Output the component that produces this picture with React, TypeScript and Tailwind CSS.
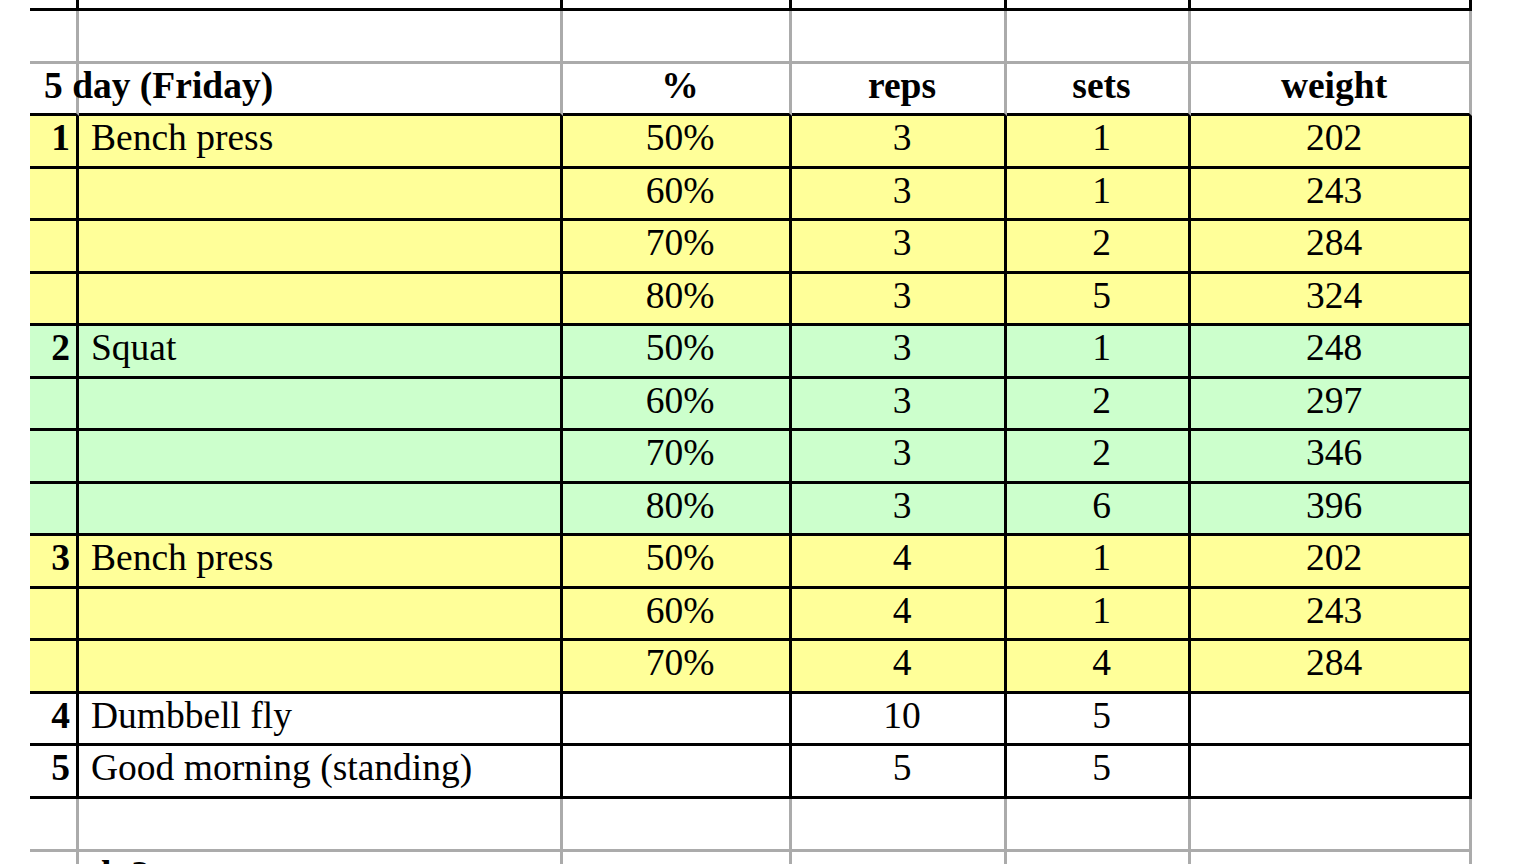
import React from "react";

type Row = {
  n?: string;
  name?: string;
  pct?: string;
  reps?: string;
  sets?: string;
  weight?: string;
  bg: string;
};

const Y = "bg-[#ffff99]";
const G = "bg-[#ccffcc]";
const W = "bg-white";

const rows: Row[] = [
  { n: "1", name: "Bench press", pct: "50%", reps: "3", sets: "1", weight: "202", bg: Y },
  { pct: "60%", reps: "3", sets: "1", weight: "243", bg: Y },
  { pct: "70%", reps: "3", sets: "2", weight: "284", bg: Y },
  { pct: "80%", reps: "3", sets: "5", weight: "324", bg: Y },
  { n: "2", name: "Squat", pct: "50%", reps: "3", sets: "1", weight: "248", bg: G },
  { pct: "60%", reps: "3", sets: "2", weight: "297", bg: G },
  { pct: "70%", reps: "3", sets: "2", weight: "346", bg: G },
  { pct: "80%", reps: "3", sets: "6", weight: "396", bg: G },
  { n: "3", name: "Bench press", pct: "50%", reps: "4", sets: "1", weight: "202", bg: Y },
  { pct: "60%", reps: "4", sets: "1", weight: "243", bg: Y },
  { pct: "70%", reps: "4", sets: "4", weight: "284", bg: Y },
  { n: "4", name: "Dumbbell fly", reps: "10", sets: "5", bg: W },
  { n: "5", name: "Good morning (standing)", reps: "5", sets: "5", bg: W },
];

const widths = ["w-[49px]", "w-[484px]", "w-[229px]", "w-[215px]", "w-[184px]", "w-[281px]"];

const cellBase = "shrink-0 border-r-[3px] border-b-[3px] border-black flex items-center pb-[6px]";

export default function App() {
  return (
    <div
      className="w-[1536px] h-[864px] overflow-hidden bg-white text-black text-[37.5px] leading-none pl-[30px]"
      style={{ fontFamily: '"Liberation Serif", "Times New Roman", serif' }}
    >
      <div className="flex flex-col w-fit">
        {/* tail of previous table */}
        <div className="flex h-[11px]">
          {widths.map((w, i) => (
            <div key={i} className={`${w} shrink-0 border-r-[3px] border-b-[3px] border-r-black border-b-black`} />
          ))}
        </div>
        {/* empty gray row */}
        <div className="flex h-[53px]">
          {widths.map((w, i) => (
            <div key={i} className={`${w} shrink-0 border-r-[3px] border-b-[3px] border-r-[#ababab] border-b-[#ababab]`} />
          ))}
        </div>
        {/* header */}
        <div className="flex h-[52px]">
          <div className="w-[49px] shrink-0 border-r-[3px] border-b-[3px] border-r-[#ababab] border-b-black relative">
            <span className="absolute left-[14px] top-[3px] font-bold whitespace-nowrap">5 day (Friday)</span>
          </div>
          <div className="w-[484px] shrink-0 border-r-[3px] border-b-[3px] border-r-[#ababab] border-b-black" />
          {["%", "reps", "sets", "weight"].map((t, i) => (
            <div
              key={t}
              className={`${widths[i + 2]} shrink-0 border-r-[3px] border-b-[3px] border-r-[#ababab] border-b-black flex items-center justify-center pl-[8px] pb-[6px] font-bold`}
            >
              {t}
            </div>
          ))}
        </div>
        {rows.map((r, idx) => (
          <div key={idx} className={`flex h-[52.5px] ${r.bg}`}>
            <div className={`w-[49px] ${cellBase} justify-end pr-[6px] font-bold`}>{r.n ?? ""}</div>
            <div className={`w-[484px] ${cellBase} pl-[12px] whitespace-nowrap`}>{r.name ?? ""}</div>
            <div className={`w-[229px] ${cellBase} justify-center pl-[8px]`}>{r.pct ?? ""}</div>
            <div className={`w-[215px] ${cellBase} justify-center pl-[8px]`}>{r.reps ?? ""}</div>
            <div className={`w-[184px] ${cellBase} justify-center pl-[8px]`}>{r.sets ?? ""}</div>
            <div className={`w-[281px] ${cellBase} justify-center pl-[8px]`}>{r.weight ?? ""}</div>
          </div>
        ))}
        {/* empty gray row */}
        <div className="flex h-[53px]">
          {widths.map((w, i) => (
            <div key={i} className={`${w} shrink-0 border-r-[3px] border-b-[3px] border-r-[#ababab] border-b-[#ababab]`} />
          ))}
        </div>
        {/* next section header (cut off by the window) */}
        <div className="flex h-[52px]">
          <div className="w-[49px] shrink-0 border-r-[3px] border-r-[#ababab] relative">
            <span className="absolute left-[44px] top-[4px] font-bold whitespace-nowrap">wk 2</span>
          </div>
          {widths.slice(1).map((w, i) => (
            <div key={i} className={`${w} shrink-0 border-r-[3px] border-r-[#ababab]`} />
          ))}
        </div>
      </div>
    </div>
  );
}
